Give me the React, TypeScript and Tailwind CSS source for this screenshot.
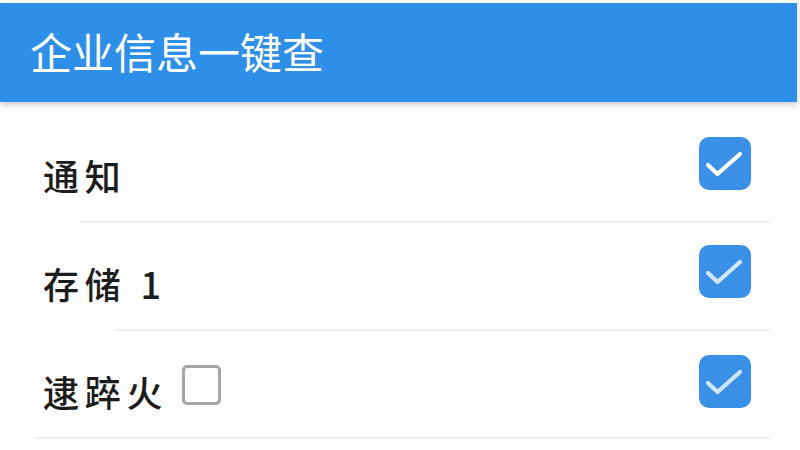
import { ReactNode } from "react";

type Row = {
  label: ReactNode;
  tick: string;
  lineInset: string;
  boxOffset: string;
};

const cjk = { fontFamily: '"Noto Sans CJK SC", "Noto Sans", sans-serif' };

function CheckBox({ tick }: { tick: string }) {
  return (
    <div className="w-[52px] h-[53px] rounded-[10px] bg-[#3a8fe6]">
      <svg width="52" height="53" viewBox="0 0 52 53" fill="none">
        <polyline
          points="9,28 18.5,37 41,17"
          stroke={tick}
          strokeWidth="4.2"
          strokeLinecap="round"
          strokeLinejoin="round"
        />
      </svg>
    </div>
  );
}

const rows: Row[] = [
  { label: "通知", tick: "#ffffff", lineInset: "ml-[80px]", boxOffset: "mb-[10px]" },
  { label: "存储 1", tick: "#cfe5fb", lineInset: "ml-[115px]", boxOffset: "mb-[10px]" },
  {
    label: (
      <span className="flex items-center">
        逮踤火
        <span className="ml-[14px] mb-[12px] w-[39px] h-[40px] border-[3px] border-[#a6a6a6] rounded-[5px] bg-white" />
      </span>
    ),
    tick: "#cfe5fb",
    lineInset: "ml-[35px]",
    boxOffset: "mb-[5px]",
  },
];

export default function App() {
  return (
    <div className="w-[800px] h-[450px] bg-[#fdfdfd] overflow-hidden" style={cjk}>
      <div className="pt-[3px]">
        <header className="h-[99px] w-[797px] bg-[#2e8fe8] shadow-[0_3px_6px_rgba(0,0,0,0.18)] flex items-center pl-[30px]">
          <h1 className="text-white text-[42px] leading-none font-normal pb-[4px]">企业信息一键查</h1>
        </header>
      </div>

      <ul className="pt-[13px]">
        {rows.map((row, i) => (
          <li key={i}>
            <div className="h-[106px] flex items-center justify-between pl-[43px] pr-[49px]">
              <span className="text-[36px] tracking-[0.16em] font-medium text-[#1c1c1c] pt-[14px] leading-none">
                {row.label}
              </span>
              <div className={row.boxOffset}>
                <CheckBox tick={row.tick} />
              </div>
            </div>
            <div className={`h-[2px] bg-[#eeeeee] mr-[30px] ${row.lineInset}`} />
          </li>
        ))}
      </ul>
    </div>
  );
}
